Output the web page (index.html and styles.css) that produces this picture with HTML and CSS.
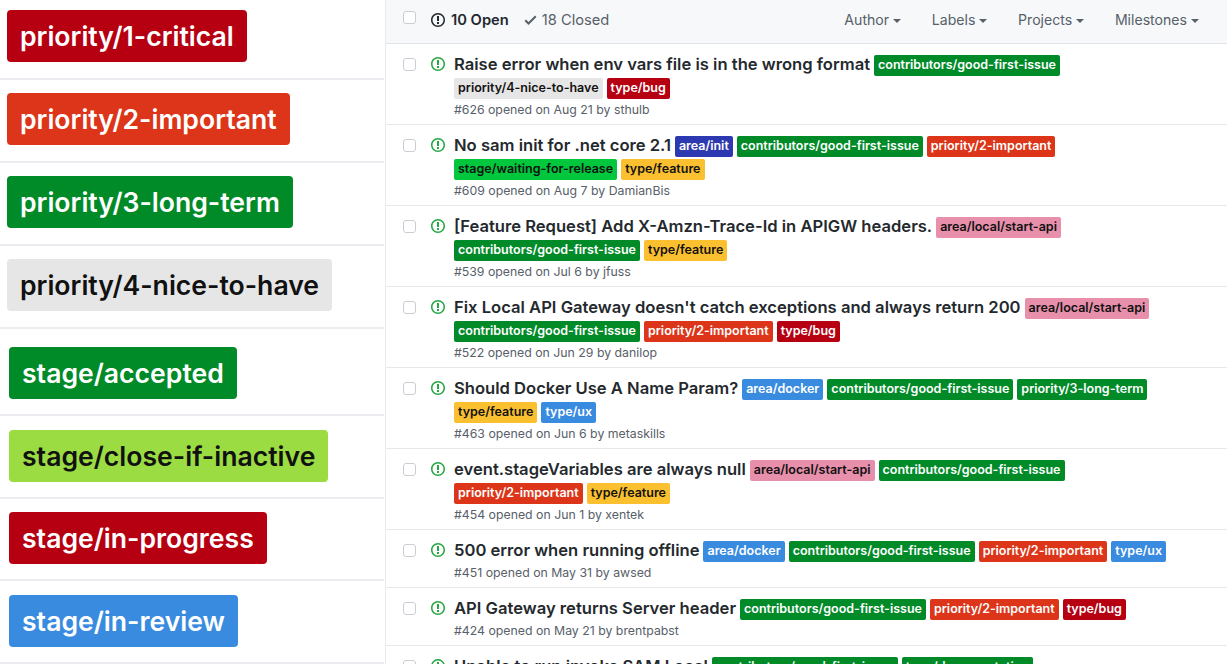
FILE: index.html
```html
<!DOCTYPE html>
<html lang="en">
<head>
<meta charset="utf-8">
<title>Issues</title>
<link rel="stylesheet" href="styles.css">
</head>
<body>
<svg class="defs" width="0" height="0" aria-hidden="true">
  <symbol id="issue" viewBox="0 0 14 14"><path fill="currentColor" fill-rule="evenodd" d="M7 1.5A5.5 5.5 0 1 1 1.5 7 5.51 5.51 0 0 1 7 1.5zM7 0C3.14 0 0 3.14 0 7s3.14 7 7 7 7-3.14 7-7-3.14-7-7-7zm1 3H6v5h2V3zm0 6H6v2h2V9z"/></symbol>
</svg>
<div class="page">
  <aside class="labels">
    <div class="label-row first"><span class="big red">priority/1-critical</span></div>
    <div class="label-row"><span class="big orange">priority/2-important</span></div>
    <div class="label-row"><span class="big green">priority/3-long-term</span></div>
    <div class="label-row"><span class="big grey">priority/4-nice-to-have</span></div>
    <div class="label-row shift roomy"><span class="big green">stage/accepted</span></div>
    <div class="label-row shift"><span class="big lime">stage/close-if-inactive</span></div>
    <div class="label-row shift short"><span class="big red">stage/in-progress</span></div>
    <div class="label-row shift"><span class="big blue">stage/in-review</span></div>
  </aside>
  <main class="issues">
    <header class="toolbar">
      <span class="check"></span>
      <span class="state open"><svg class="state-icon"><use href="#issue"/></svg>10 Open</span>
      <span class="state closed"><svg class="tick" viewBox="0 0 12 16"><path fill="currentColor" fill-rule="evenodd" d="M12 5l-8 8-4-4 1.5-1.5L4 10l6.5-6.5L12 5z"/></svg>18 Closed</span>
      <nav class="filters">
        <span class="filter">Author<i class="caret"></i></span>
        <span class="filter">Labels<i class="caret"></i></span>
        <span class="filter">Projects<i class="caret"></i></span>
        <span class="filter">Milestones<i class="caret"></i></span>
      </nav>
    </header>

    <article class="issue">
      <span class="check"></span><svg class="issue-icon"><use href="#issue"/></svg>
      <div class="body">
        <div class="head"><a class="title">Raise error when env vars file is in the wrong format</a><span class="tag green">contributors/good-first-issue</span><span class="tag grey">priority/4-nice-to-have</span><span class="tag red">type/bug</span></div>
        <p class="meta">#626 opened on Aug 21 by sthulb</p>
      </div>
    </article>

    <article class="issue">
      <span class="check"></span><svg class="issue-icon"><use href="#issue"/></svg>
      <div class="body">
        <div class="head"><a class="title">No sam init for .net core 2.1</a><span class="tag navy">area/init</span><span class="tag green">contributors/good-first-issue</span><span class="tag orange">priority/2-important</span><span class="tag brightgreen">stage/waiting-for-release</span><span class="tag yellow">type/feature</span></div>
        <p class="meta">#609 opened on Aug 7 by DamianBis</p>
      </div>
    </article>

    <article class="issue">
      <span class="check"></span><svg class="issue-icon"><use href="#issue"/></svg>
      <div class="body">
        <div class="head"><a class="title">[Feature Request] Add X-Amzn-Trace-Id in APIGW headers.</a><span class="tag pink">area/local/start-api</span><span class="tag green">contributors/good-first-issue</span><span class="tag yellow">type/feature</span></div>
        <p class="meta">#539 opened on Jul 6 by jfuss</p>
      </div>
    </article>

    <article class="issue">
      <span class="check"></span><svg class="issue-icon"><use href="#issue"/></svg>
      <div class="body">
        <div class="head"><a class="title">Fix Local API Gateway doesn't catch exceptions and always return 200</a><span class="tag pink">area/local/start-api</span><span class="tag green">contributors/good-first-issue</span><span class="tag orange">priority/2-important</span><span class="tag red">type/bug</span></div>
        <p class="meta">#522 opened on Jun 29 by danilop</p>
      </div>
    </article>

    <article class="issue">
      <span class="check"></span><svg class="issue-icon"><use href="#issue"/></svg>
      <div class="body">
        <div class="head"><a class="title">Should Docker Use A Name Param?</a><span class="tag blue">area/docker</span><span class="tag green">contributors/good-first-issue</span><span class="tag green">priority/3-long-term</span><span class="tag yellow">type/feature</span><span class="tag blue">type/ux</span></div>
        <p class="meta">#463 opened on Jun 6 by metaskills</p>
      </div>
    </article>

    <article class="issue">
      <span class="check"></span><svg class="issue-icon"><use href="#issue"/></svg>
      <div class="body">
        <div class="head"><a class="title">event.stageVariables are always null</a><span class="tag pink">area/local/start-api</span><span class="tag green">contributors/good-first-issue</span><span class="tag orange">priority/2-important</span><span class="tag yellow">type/feature</span></div>
        <p class="meta">#454 opened on Jun 1 by xentek</p>
      </div>
    </article>

    <article class="issue">
      <span class="check"></span><svg class="issue-icon"><use href="#issue"/></svg>
      <div class="body">
        <div class="head"><a class="title">500 error when running offline</a><span class="tag blue">area/docker</span><span class="tag green">contributors/good-first-issue</span><span class="tag orange">priority/2-important</span><span class="tag blue">type/ux</span></div>
        <p class="meta">#451 opened on May 31 by awsed</p>
      </div>
    </article>

    <article class="issue">
      <span class="check"></span><svg class="issue-icon"><use href="#issue"/></svg>
      <div class="body">
        <div class="head"><a class="title">API Gateway returns Server header</a><span class="tag green">contributors/good-first-issue</span><span class="tag orange">priority/2-important</span><span class="tag red">type/bug</span></div>
        <p class="meta">#424 opened on May 21 by brentpabst</p>
      </div>
    </article>

    <article class="issue">
      <span class="check"></span><svg class="issue-icon"><use href="#issue"/></svg>
      <div class="body">
        <div class="head"><a class="title">Unable to run invoke SAM Local</a><span class="tag green">contributors/good-first-issue</span><span class="tag green">type/documentation</span></div>
      </div>
    </article>
  </main>
</div>
</body>
</html>
```
FILE: styles.css
```css
* { box-sizing: border-box; }
html, body { margin: 0; height: 100%; overflow: hidden; background: #fff; }
body { font-family: Inter, "Liberation Sans", sans-serif; color: #24292e; }
.defs { position: absolute; }
.page { display: flex; height: 664px; overflow: hidden; }

.labels { width: 386px; flex: none; padding-right: 2px; background: linear-gradient(#e9ebef, #e9ebef) no-repeat right top / 1px 100%; }
.label-row { padding: 13px 0 16px 7px; border-bottom: 2px solid #eaecef; }
.label-row.first { padding-top: 10px; }
.label-row.shift { padding: 14px 0 15px 9px; }
.label-row.roomy { padding-top: 18px; }
.label-row.short { padding-top: 13px; }
.big { display: block; width: fit-content; height: 52px; line-height: 53px; padding: 0 13px; border-radius: 4px; font-size: 26.6px; font-weight: 600; color: #fff; }
.big.grey, .big.lime { color: #111; }

.red { background: #b60011; }
.orange { background: #dc3519; }
.green { background: #008a28; }
.grey { background: #e6e6e6; }
.lime { background: #9bdc43; }
.blue { background: #398bdf; }
.navy { background: #2c39b0; }
.brightgreen { background: #00c73c; }
.yellow { background: #fbc02f; }
.pink { background: #e78fab; }

.issues { flex: 1; min-width: 0; }
.toolbar { display: flex; align-items: center; height: 44px; background: #f6f8fa; border-bottom: 1px solid #e1e4e8; padding: 0 0 4px 17px; font-size: 14.7px; }
.check { display: block; flex: none; width: 13px; height: 13px; border: 1px solid #c9ced3; border-radius: 3px; background: #fff; }
.toolbar .check { margin-top: -4px; }
.state { display: inline-flex; align-items: center; }
.state.open { margin-left: 15px; font-weight: 600; color: #24292e; }
.state.closed { margin-left: 15px; color: #586069; }
.state-icon { width: 14px; height: 14px; margin-right: 6px; color: #24292e; }
.tick { width: 13px; height: 16px; margin-right: 5px; color: #586069; }
.filters { display: flex; margin-left: auto; padding-right: 28px; gap: 30.7px; color: #586069; font-size: 14.1px; }
.filter { display: inline-flex; align-items: center; }
.caret { width: 0; height: 0; margin-left: 4px; margin-top: 2px; border: 4px solid transparent; border-top-color: #586069; border-bottom: 0; }

.issue { display: flex; align-items: flex-start; border-bottom: 1px solid #e6e8eb; padding: 9px 0 5px 17px; }
.issue .check { margin-top: 5px; }
.issue-icon { flex: none; width: 14px; height: 14px; margin: 4px 0 0 15px; color: #28a745; }
.body { flex: 1; min-width: 0; padding-left: 9px; padding-right: 50px; }
.head { line-height: 23px; }
.title { font-size: 16.6px; font-weight: 600; color: #24292e; margin-right: 4px; }
.tag { display: inline-block; height: 21px; line-height: 20px; padding: 0 4px; margin-right: 4px; border-radius: 2px; font-size: 12.5px; font-weight: 600; color: #fff; vertical-align: 1px; white-space: nowrap; }
.tag.grey, .tag.yellow, .tag.pink, .tag.brightgreen { color: #111; }
.meta { margin: 2px 0 0; font-size: 12.3px; line-height: 18px; color: #586069; }
```
